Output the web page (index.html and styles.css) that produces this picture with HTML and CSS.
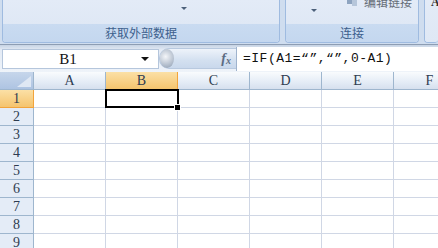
FILE: index.html
```html
<!DOCTYPE html>
<html lang="zh-CN">
<head>
  <meta charset="UTF-8">
  <title>Excel - 数据</title>
  <link rel="stylesheet" href="styles.css">
</head>
<body>
  <!-- Ribbon (bottom part only visible) -->
  <div class="ribbon">
    <div class="group g-data">
      <div class="group-body">
        <span class="drop"></span>
      </div>
      <div class="group-label">获取外部数据</div>
    </div>
    <div class="group g-conn">
      <div class="group-body">
        <span class="drop"></span>
        <span class="cut-item">
          <svg width="12" height="10" viewBox="0 0 12 10"><rect x="1" y="1" width="5" height="6" fill="#8ea4c0"/><rect x="6" y="3" width="5" height="6" fill="#b6c6da"/></svg>
          编辑链接
        </span>
      </div>
      <div class="group-label">连接</div>
    </div>
    <div class="group g-next">
      <div class="group-body"><span class="cut-a">A</span></div>
    </div>
  </div>

  <!-- Formula bar -->
  <div class="fbar">
    <div class="namebox">
      <span class="name">B1</span>
      <span class="nb-arrow"></span>
    </div>
    <div class="fx-area">
      <span class="knob"></span>
      <span class="fx">f<sub>x</sub></span>
    </div>
    <div class="formula">=IF(A1=“”,“”,0-A1)</div>
  </div>

  <!-- Worksheet -->
  <div class="sheet">
    <div class="row head">
      <div class="corner">
        <svg width="14" height="11" viewBox="0 0 14 11"><polygon points="14,0 14,11 0,11" fill="#dfe8f4"/></svg>
      </div>
      <div class="ch">A</div>
      <div class="ch sel">B</div>
      <div class="ch">C</div>
      <div class="ch">D</div>
      <div class="ch">E</div>
      <div class="ch">F</div>
    </div>
    <div class="row">
      <div class="rh sel">1</div>
      <div class="cell"></div>
      <div class="cell active"><span class="handle"></span></div>
      <div class="cell"></div><div class="cell"></div><div class="cell"></div><div class="cell"></div>
    </div>
    <div class="row"><div class="rh">2</div><div class="cell"></div><div class="cell"></div><div class="cell"></div><div class="cell"></div><div class="cell"></div><div class="cell"></div></div>
    <div class="row"><div class="rh">3</div><div class="cell"></div><div class="cell"></div><div class="cell"></div><div class="cell"></div><div class="cell"></div><div class="cell"></div></div>
    <div class="row"><div class="rh">4</div><div class="cell"></div><div class="cell"></div><div class="cell"></div><div class="cell"></div><div class="cell"></div><div class="cell"></div></div>
    <div class="row"><div class="rh">5</div><div class="cell"></div><div class="cell"></div><div class="cell"></div><div class="cell"></div><div class="cell"></div><div class="cell"></div></div>
    <div class="row"><div class="rh">6</div><div class="cell"></div><div class="cell"></div><div class="cell"></div><div class="cell"></div><div class="cell"></div><div class="cell"></div></div>
    <div class="row"><div class="rh">7</div><div class="cell"></div><div class="cell"></div><div class="cell"></div><div class="cell"></div><div class="cell"></div><div class="cell"></div></div>
    <div class="row"><div class="rh">8</div><div class="cell"></div><div class="cell"></div><div class="cell"></div><div class="cell"></div><div class="cell"></div><div class="cell"></div></div>
    <div class="row"><div class="rh">9</div><div class="cell"></div><div class="cell"></div><div class="cell"></div><div class="cell"></div><div class="cell"></div><div class="cell"></div></div>
  </div>
</body>
</html>
```

FILE: styles.css
```css
:root {
  --ribbon-bg: #cfddef;
  --group-top: #dfe8f5;
  --group-band: #c4d7ef;
  --group-border: #9fbbe0;
  --label: #3d5f8d;
  --head-text: #2e3c50;
  --head-border: #9eb6ce;
  --grid: #d0d7e5;
  --sel-top: #fbe0a6;
  --sel-bottom: #f5c46e;
}
html, body {
  margin: 0;
  padding: 0;
  width: 438px;
  height: 248px;
  overflow: hidden;
  background: #fff;
  font-family: 'Liberation Serif', 'Noto Sans CJK SC', serif;
}

/* Ribbon */
.ribbon {
  height: 44px;
  display: flex;
  gap: 5px;
  padding-left: 2px;
  background: var(--ribbon-bg);
  box-sizing: border-box;
}
.group {
  display: flex;
  flex-direction: column;
  border: 1px solid var(--group-border);
  border-top: none;
  border-radius: 0 0 4px 4px;
  box-shadow: inset 1px 0 0 #eef4fb, inset -1px 0 0 #eef4fb;
  height: 43px;
  box-sizing: border-box;
  overflow: hidden;
}
.g-data { width: 278px; }
.g-conn { width: 134px; }
.g-next { flex: 1; border-right: none; }
.group-body {
  flex: 1;
  display: flex;
  align-items: flex-start;
  background: linear-gradient(#e3ebf7, var(--group-top));
}
.group-label {
  height: 18px;
  line-height: 17px;
  text-align: center;
  font-family: 'Noto Sans CJK SC', sans-serif;
  font-size: 12px;
  color: var(--label);
  background: linear-gradient(#c9dbf1, var(--group-band));
}
.drop {
  width: 0;
  height: 0;
  border-left: 3px solid transparent;
  border-right: 3px solid transparent;
  border-top: 3px solid #4c607a;
}
.g-data .drop { margin: 7px 0 0 178px; }
.g-conn .drop { margin: 9px 0 0 25px; }
.cut-item {
  margin: -7px 0 0 auto;
  padding-right: 6px;
  display: flex;
  align-items: center;
  gap: 6px;
  font-family: 'Noto Sans CJK SC', sans-serif;
  font-size: 12px;
  color: #666e78;
}
.cut-a {
  margin: -5px 0 0 6px;
  font-size: 12px;
  font-weight: bold;
  color: #333;
}

/* Formula bar */
.fbar {
  height: 28px;
  display: flex;
  align-items: flex-start;
  padding: 3px 0 0 2px;
  box-sizing: border-box;
  border-top: 1px solid #8d9db3;
  background: linear-gradient(#c6d3e4, #e4ebf5 5px, #eef3f9);
}
.namebox {
  width: 157px;
  height: 20px;
  margin-top: 1px;
  display: flex;
  align-items: center;
  box-sizing: border-box;
  border: 1px solid #b5c6dc;
  background: #fff;
}
.name {
  flex: 1;
  text-align: center;
  font-size: 15px;
  color: #111;
  padding-right: 8px;
}
.nb-arrow {
  width: 0;
  height: 0;
  margin-right: 9px;
  border-left: 4px solid transparent;
  border-right: 4px solid transparent;
  border-top: 4px solid #111;
}
.fx-area {
  width: 77px;
  height: 21px;
  display: flex;
  align-items: center;
  justify-content: space-between;
  background: linear-gradient(#eef3fa, #d3e0f0 60%, #c9d8ec);
  border-radius: 10px 0 0 10px;
  border: 1px solid #b8c9df;
  border-right: none;
  box-sizing: border-box;
}
.knob {
  width: 14px;
  height: 19px;
  border-radius: 50%;
  background: radial-gradient(circle at 40% 40%, #f4f6f9, #aab6c6 70%, #8996a8);
}
.fx {
  margin-right: 5px;
  font-size: 14px;
  font-style: italic;
  font-weight: bold;
  color: #5b6b82;
}
.fx sub { font-size: 10px; vertical-align: -1px; }
.formula {
  flex: 1;
  height: 24px;
  margin-top: -1px;
  padding-left: 6px;
  box-sizing: border-box;
  border-left: 1px solid #9fb3cd;
  background: #fff;
  font-family: 'Liberation Mono', 'Noto Sans CJK SC', monospace;
  font-size: 13px;
  letter-spacing: 0.5px;
  line-height: 23px;
  color: #111;
}

/* Sheet */
.sheet { overflow: hidden; }
.row {
  display: grid;
  grid-template-columns: 34px repeat(6, 72px);
  height: 18px;
}
.row > div {
  box-sizing: border-box;
  border-right: 1px solid var(--grid);
  border-bottom: 1px solid var(--grid);
}
.head > div {
  border-color: var(--head-border);
  text-align: center;
  font-size: 14px;
  line-height: 17px;
  color: var(--head-text);
  background: linear-gradient(#f9fbfd, #e4ecf6 60%, #d6e0ee);
}
.head > .corner {
  display: flex;
  align-items: flex-end;
  justify-content: flex-end;
  padding: 0 2px 2px 0;
  background: linear-gradient(#c6d6eb, #aec4e2);
}
.head > .sel,
.row > .rh.sel {
  background: linear-gradient(var(--sel-top), var(--sel-bottom));
  border-color: #f2a43c;
}
.rh {
  text-align: center;
  font-size: 14px;
  line-height: 17px;
  color: var(--head-text);
  background: #e4ecf7;
}
.row > .rh { border-color: var(--head-border); }
.cell.active { position: relative; }
.cell.active::after {
  content: "";
  position: absolute;
  top: -1px;
  left: -1px;
  right: -2px;
  bottom: -1px;
  border: 2px solid #000;
}
.handle {
  position: absolute;
  right: -4px;
  bottom: -4px;
  width: 5px;
  height: 5px;
  background: #000;
  border: 1px solid #fff;
  z-index: 1;
}
```
